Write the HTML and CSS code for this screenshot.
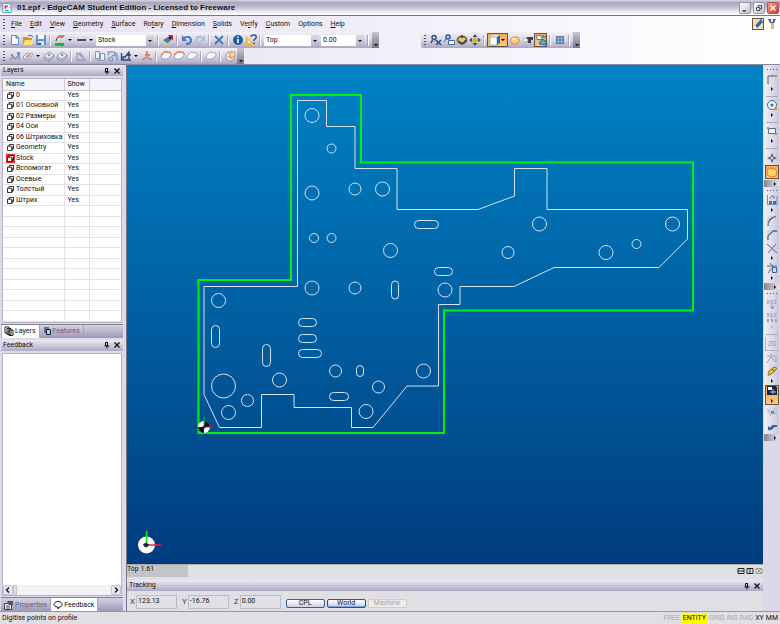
FILE: index.html
```html
<!DOCTYPE html>
<html lang="en">
<head>
<meta charset="utf-8">
<title>01.epf - EdgeCAM Student Edition</title>
<link rel="stylesheet" href="styles.css">
</head>
<body>
<svg class="sprite" aria-hidden="true">
  <symbol id="new" viewBox="0 0 12 12"><path d="M2.500 1.500h5l2 2v7h-7z" fill="#fff" stroke="#5a8fc8"/><path d="M7 1v3h3" fill="#b8d4f0" stroke="#3a70b0"/></symbol>
  <symbol id="open" viewBox="0 0 12 12"><path d="M1 3h4l1 1h4v7H1z" fill="#d89018"/><path d="M3 6h9l-2 5H1z" fill="#ffe070"/><path d="M6 2q3-2 5 1" fill="none" stroke="#3a68b0"/></symbol>
  <symbol id="save" viewBox="0 0 12 12"><path d="M1 1h10v10H1z" fill="#5c94d0"/><path d="M3 1h6v4H3z" fill="#fff"/><path d="M3 7h6v4H3z" fill="#cfe0f4"/><path d="M3 9h3v2H3z" fill="#2c5c98"/></symbol>
  <symbol id="pen" viewBox="0 0 12 12"><path d="M2 7q1-5 5-5" fill="none" stroke="#333"/><path d="M5 1l6 0-2 3-4 0z" fill="#e07838"/><path d="M1 9h9v3H1z" fill="#00c820"/></symbol>
  <symbol id="line" viewBox="0 0 12 12"><path d="M2 6h9" stroke="#222" stroke-width="1.500"/></symbol>
  <symbol id="brush" viewBox="0 0 12 12"><path d="M1 6l5-3 3 3-4 4z" fill="#4b78b8"/><path d="M6 1h5v6z" fill="#d42818"/><path d="M2 7l5 3-1 1-4-2z" fill="#f4d020"/><path d="M7 3l2 2" stroke="#111" stroke-width="2"/></symbol>
  <symbol id="undo" viewBox="0 0 12 12"><path d="M3 4q6-3 7 2 0 4-5 4" fill="none" stroke="#4877b8" stroke-width="2"/><path d="M1 1v6h5z" fill="#4877b8"/></symbol>
  <symbol id="redo" viewBox="0 0 12 12"><path d="M9 4Q3 1 2 6q0 4 5 4" fill="none" stroke="#a9bfdc" stroke-width="2"/><path d="M11 1v6H6z" fill="#a9bfdc"/></symbol>
  <symbol id="cross" viewBox="0 0 12 12"><path d="M2 2l8 8M10 2l-8 8" stroke="#4878b8" stroke-width="2"/></symbol>
  <symbol id="info" viewBox="0 0 12 12"><circle cx="6" cy="6" r="5" fill="#1f5f9c"/><path d="M6 5v4M6 2.500v1.200" stroke="#fff" stroke-width="1.600"/></symbol>
  <symbol id="helpico" viewBox="0 0 12 12"><path d="M1 2v9h9z" fill="#f4bc28"/><path d="M3 6v3h3z" fill="#fff"/><path d="M6 3q0-2 3-2t2 3L9 6v1M9 8.500v1.500" fill="none" stroke="#24589c" stroke-width="1.500"/></symbol>
  <symbol id="view1" viewBox="0 0 12 12"><circle cx="4" cy="3.500" r="2" fill="#cfe2f4" stroke="#2a5890" stroke-width="1.500"/><path d="M2.500 6L1 9M6 6l5 5M11 6l-5 5" stroke="#24548c" stroke-width="1.600"/><path d="M4 7h2" stroke="#e0a010" stroke-width="2"/></symbol>
  <symbol id="view2" viewBox="0 0 12 12"><circle cx="5" cy="3" r="2" fill="#cfe2f4" stroke="#2a5890" stroke-width="1.500"/><path d="M3 5L1 8M5.500 6.500h6v4h-6z" fill="#fff" stroke="#3a689c"/></symbol>
  <symbol id="view3" viewBox="0 0 12 12"><ellipse cx="6" cy="6" rx="4.500" ry="3.500" fill="none" stroke="#8c6a18" stroke-width="2"/><path d="M6 1v4M3 7l3 3 4-4" stroke="#1c4080" fill="none" stroke-width="1.500"/><circle cx="6" cy="6" r="2" fill="#f0c848"/></symbol>
  <symbol id="view4" viewBox="0 0 12 12"><path d="M6 2v8M2 6h8" stroke="#e4ac20" stroke-width="2.500"/><path d="M6 0l2.500 3h-5zM6 12l2.500-3h-5zM0 6l3-2.500v5zM12 6L9 3.500v5z" fill="#2c5a94"/></symbol>
  <symbol id="cube" viewBox="0 0 12 12"><path d="M1 3l3-2h7L8 3z" fill="#d9eefc"/><path d="M1 3h7v8H1z" fill="#fff" stroke="#5080b0" stroke-width=".5"/><path d="M8 3l3-2v8l-3 2z" fill="#2470b8"/></symbol>
  <symbol id="solid" viewBox="0 0 12 12"><path d="M1 6l3-3 5 0 2 4-4 3H3z" fill="#f8c878" stroke="#dc942c"/><path d="M3 5h4" stroke="#fff"/></symbol>
  <symbol id="section" viewBox="0 0 12 12"><path d="M1 5l4-2h6L8 9 2 8z" fill="#a6b6ca"/><path d="M5 3h6v3H9v3H6V5H5z" fill="#3b4450"/><path d="M2 5h3v2H2z" fill="#fff"/></symbol>
  <symbol id="ortho" viewBox="0 0 12 12"><path d="M1.500 1.500h4l2 4H2z" fill="#fff" stroke="#4a86a8"/><path d="M4 10l3-5 4 2v4z" fill="#48b0d0" stroke="#2c6890"/><path d="M8 1v2h3" fill="none" stroke="#24587c"/></symbol>
  <symbol id="grid" viewBox="0 0 12 12"><path d="M2 2h8v8H2z" fill="#c4d4e8"/><path d="M3 2v8M6 2v8M9 2v8M2 3h8M2 6h8M2 9h8" stroke="#3c6498"/></symbol>
  <symbol id="steps" viewBox="0 0 12 12"><path d="M1 10l3-4 2 3 4-4v5" fill="none" stroke="#8699b5" stroke-width="1.500"/><path d="M2 4h2v2H2zM8 2h3v3H8z" fill="#7b8fb2"/></symbol>
  <symbol id="disc" viewBox="0 0 12 12"><path d="M1 7l4-4 6 1-4 5H2z" fill="#eeeef4" stroke="#929ab0"/><path d="M4 7l4-2" stroke="#dc8868" stroke-width="2"/></symbol>
  <symbol id="mill" viewBox="0 0 12 12"><path d="M1 6l5-4 5 3-5 4z" fill="#fafafc" stroke="#8e98ac"/><path d="M1 7v2l5 2 5-4V5" fill="none" stroke="#8892a8"/><circle cx="6" cy="5" r="1.500" fill="#8994ae"/></symbol>
  <symbol id="lathe" viewBox="0 0 12 12"><path d="M2 2v8h8M2 4h4l4 6M5 2v4h3" fill="none" stroke="#7c92b4"/></symbol>
  <symbol id="copy" viewBox="0 0 12 12"><path d="M1.500 1.500h4v7h-4zM6.500 3.500h4v7h-4zM3 10h3" fill="#eef2fa" stroke="#8197b8"/></symbol>
  <symbol id="turn" viewBox="0 0 12 12"><path d="M1.500 5V2h5M5 5.500h5v5" fill="none" stroke="#8299bc" stroke-width="1.500"/><circle cx="4" cy="9" r="2" fill="none" stroke="#7793bb"/><path d="M7 1l4 3-4 1z" fill="#8299bc"/></symbol>
  <symbol id="chart" viewBox="0 0 12 12"><path d="M1.500 3v7H11M3 9V7h2l4-5v7M6 5h5" fill="none" stroke="#24487c" stroke-width="1.300"/></symbol>
  <symbol id="axes" viewBox="0 0 12 12"><path d="M6 1v6l5 3M6 7l-5 3M4 5h5" fill="none" stroke="#e08068" stroke-width="1.800"/><path d="M4 9l2-2 2 3" stroke="#99a4b8" fill="none"/></symbol>
  <symbol id="ringo" viewBox="0 0 12 12"><path d="M1 6l4-4 6 1v3L7 9 2 9z" fill="#fafafe" stroke="#9098b0"/><path d="M1 5l4-3.500 6 1" fill="none" stroke="#e88860" stroke-width="1.500"/></symbol>
  <symbol id="ringb" viewBox="0 0 12 12"><path d="M1 6l4-4 6 1v3L7 9 2 9z" fill="#fafafe" stroke="#a0aabc"/><path d="M5 10l6-4" stroke="#9cb4d8"/></symbol>
  <symbol id="boxy" viewBox="0 0 12 12"><circle cx="6" cy="6.500" r="4.500" fill="#e8e8f2" stroke="#8898b0"/><path d="M6 2h5v5H6zM3 6l5 3" fill="#f8dfa0" stroke="#d49848"/></symbol>
  <symbol id="polyline" viewBox="0 0 12 12"><path d="M2 11V3h7" fill="none" stroke="#40649c"/><path d="M1 9h2v2H1zM9 2h2v2H9z" fill="#cc8a35"/><path d="M6 1v3" stroke="#888"/></symbol>
  <symbol id="circle" viewBox="0 0 12 12"><circle cx="6" cy="6" r="4.500" fill="#e8f1fc" stroke="#3b6aa0"/><circle cx="6" cy="6" r="1.500" fill="#3b6aa0"/><path d="M8 9h3v2H8z" fill="#db941e"/></symbol>
  <symbol id="rect" viewBox="0 0 12 12"><path d="M2.500 3.500h7v5h-7z" fill="#f1f6fd" stroke="#446fa8"/><path d="M1 2h2v2H1zM9 8h2v2H9z" fill="#d28b30"/></symbol>
  <symbol id="point" viewBox="0 0 12 12"><path d="M6 1l1.500 3.500L11 6 7.500 7.500 6 11 4.500 7.500 1 6l3.500-1.500z" fill="#3a6098"/><circle cx="6" cy="6" r="1.500" fill="#ffe03c"/></symbol>
  <symbol id="surf" viewBox="0 0 12 12"><path d="M1 4l3-2 5 1 2 2-1 5-5 1-4-2z" fill="#ffd05c" stroke="#e87822"/><path d="M3 5l3 2 3-2" stroke="#fff5d0" fill="none"/></symbol>
  <symbol id="pattern" viewBox="0 0 12 12"><path d="M1.500 1v9.500H11V2" fill="none" stroke="#7790b0"/><path d="M3 7h3v3H3zM7 7h3v3H7z" fill="#456b9c"/><path d="M4 5q1-4 4-3v3" fill="none" stroke="#5279a8"/></symbol>
  <symbol id="fillet" viewBox="0 0 12 12"><path d="M2 11Q2 3 10 1.500" fill="none" stroke="#3c6494" stroke-width="1.300"/><path d="M2 10V2h8" fill="none" stroke="#b4bfd0" stroke-width=".7"/></symbol>
  <symbol id="chamfer" viewBox="0 0 12 12"><path d="M2 11V7l5-5h4" fill="none" stroke="#3c6494" stroke-width="1.300"/><path d="M2 7V2h5" fill="none" stroke="#b4bfd0" stroke-width=".7"/></symbol>
  <symbol id="trim" viewBox="0 0 12 12"><path d="M1 2l10 9M10 2l-8 9" stroke="#506f98"/></symbol>
  <symbol id="explode" viewBox="0 0 12 12"><path d="M1 4h10M4 1l3 4-5 6" fill="none" stroke="#496c98"/><path d="M6.500 5.500h4v5h-4z" fill="#cde0f2" stroke="#3c6494"/></symbol>
  <symbol id="star" viewBox="0 0 12 12"><path d="M1 4h9M5 1v4l-4 6M5 5l5 5V5" fill="none" stroke="#94a7c4"/></symbol>
  <symbol id="torch" viewBox="0 0 12 12"><path d="M2 10l1-4 5-4 3 1-2 3-5 4z" fill="#e8c03c" stroke="#927228"/><path d="M6 4l2 2" stroke="#604c20"/></symbol>
  <symbol id="save2" viewBox="0 0 12 12"><path d="M1 1h9l1 2v7H1z" fill="#1c2434"/><path d="M2 2h4v3H2z" fill="#fff"/><path d="M4 7h6M7 4v5" stroke="#6ba0dc" stroke-width="1.500"/></symbol>
  <symbol id="node" viewBox="0 0 12 12"><path d="M1 3l10 6M1 6h10M9 2L4 10" stroke="#a7b5cc"/><path d="M5 5h3v3H5z" fill="#6a8eb8"/></symbol>
  <symbol id="wave" viewBox="0 0 12 12"><path d="M2 10V6q3 3 4-1h5v2H8q-2 4-6 3z" fill="#2d66aa"/></symbol>
  <symbol id="layer" viewBox="0 0 8 8"><path d="M2.500.5h5v4h-5z" fill="#fff" stroke="#111"/><path d="M.5 2.500h5v5h-5z" fill="#fff" stroke="#111"/><path d="M6 5v2M7 4v2" stroke="#111"/></symbol>
  <symbol id="pin" viewBox="0 0 8 8"><path d="M2.500 1.500h2v3h-2zM1.500 5h5M4 5v2.500" fill="none" stroke="#111"/><path d="M4.500 1v4" stroke="#111"/></symbol>
  <symbol id="x" viewBox="0 0 8 8"><path d="M1.500 1.500l5 5M6.500 1.500l-5 5" stroke="#111" stroke-width="1.300"/></symbol>
</svg>

<div class="window">
  <header class="titlebar">
    <svg class="appicon" viewBox="0 0 12 12"><path d="M1 .5h7L11 3v8.500H1z" fill="#fff" stroke="#2c9cd8"/><path d="M3 3h4v2H5v2H3z" fill="#e03828"/><path d="M4 8h4v2H4zM8 4l2 1v2z" fill="#2490c8"/></svg>
    <h1>01.epf - EdgeCAM Student Edition - Licensed to Freeware</h1>
    <button class="winbtn" aria-label="Minimize"><svg viewBox="0 0 12 12"><path d="M3 9.500h4" stroke="#222" stroke-width="1.600"/></svg></button>
    <button class="winbtn" aria-label="Restore"><svg viewBox="0 0 12 12"><path d="M5 5V3h4v4H7M3 5.500h4v3.500H3z" fill="none" stroke="#333"/></svg></button>
    <button class="winbtn close" aria-label="Close"><svg viewBox="0 0 12 12"><path d="M3 3l6 6M9 3l-6 6" stroke="#fff" stroke-width="1.600"/></svg></button>
  </header>

  <div class="bars">
    <nav class="menubar">
      <i class="grip"></i>
      <a href="#"><u>F</u>ile</a><a href="#"><u>E</u>dit</a><a href="#"><u>V</u>iew</a><a href="#"><u>G</u>eometry</a><a href="#"><u>S</u>urface</a><a href="#">Ro<u>t</u>ary</a><a href="#"><u>D</u>imension</a><a href="#"><u>S</u>olids</a><a href="#">Ve<u>r</u>ify</a><a href="#"><u>C</u>ustom</a><a href="#">Options</a><a href="#"><u>H</u>elp</a>
      <span class="modes">
        <button class="tb on" aria-label="Design"><svg viewBox="0 0 12 12"><path d="M1 1h10v10H1z" fill="#fbd9a0"/><path d="M2 9l7-8 2 3-6 6z" fill="#2b66b8"/><path d="M1 11l2-4 2 3z" fill="#fff"/></svg></button>
        <button class="tb" aria-label="Manufacture"><svg viewBox="0 0 12 12"><path d="M2 1h8L8 5H4z" fill="#42678c"/><path d="M5 1h2v3H5z" fill="#dcebf8"/><path d="M5 5h3v6H5z" fill="#dcc06c"/></svg></button>
      </span>
    </nav>

    <div class="toolrow">
      <div class="toolbar">
        <i class="grip"></i>
        <button class="tb" aria-label="New"><svg><use href="#new"/></svg></button>
        <button class="tb" aria-label="Open"><svg><use href="#open"/></svg></button>
        <button class="tb" aria-label="Save"><svg><use href="#save"/></svg></button>
        <i class="sep"></i>
        <button class="tb drop" aria-label="Colour"><svg><use href="#pen"/></svg></button>
        <button class="tb drop" aria-label="Line style"><svg><use href="#line"/></svg></button>
        <span class="combo wide"><select aria-label="Layer"><option>Stock</option></select></span>
        <i class="sep"></i>
        <button class="tb" aria-label="Change"><svg><use href="#brush"/></svg></button>
        <i class="sep"></i>
        <button class="tb" aria-label="Undo"><svg><use href="#undo"/></svg></button>
        <button class="tb" aria-label="Redo"><svg><use href="#redo"/></svg></button>
        <i class="sep"></i>
        <button class="tb" aria-label="Delete"><svg><use href="#cross"/></svg></button>
        <i class="sep"></i>
        <button class="tb" aria-label="Info"><svg><use href="#info"/></svg></button>
        <button class="tb" aria-label="Help"><svg><use href="#helpico"/></svg></button>
        <i class="sep"></i>
        <span class="combo mid"><select aria-label="Plane"><option>Top</option></select></span>
        <span class="combo small"><select aria-label="Level"><option>0.00</option></select></span>
        <i class="sep"></i>
        <i class="end"></i>
      </div>
      <div class="toolbar second">
        <i class="grip"></i>
        <button class="tb" aria-label="Zoom extents"><svg><use href="#view1"/></svg></button>
        <button class="tb" aria-label="Zoom window"><svg><use href="#view2"/></svg></button>
        <button class="tb" aria-label="Rotate"><svg><use href="#view3"/></svg></button>
        <button class="tb" aria-label="Pan"><svg><use href="#view4"/></svg></button>
        <i class="sep"></i>
        <button class="tb drop on" aria-label="Shading"><svg><use href="#cube"/></svg></button>
        <button class="tb" aria-label="Solid"><svg><use href="#solid"/></svg></button>
        <button class="tb" aria-label="Section"><svg><use href="#section"/></svg></button>
        <button class="tb on" aria-label="Views"><svg><use href="#ortho"/></svg></button>
        <i class="sep"></i>
        <button class="tb" aria-label="Grid"><svg><use href="#grid"/></svg></button>
        <i class="sep"></i>
        <i class="end"></i>
      </div>
    </div>

    <div class="toolrow">
      <div class="toolbar">
        <i class="grip"></i>
        <button class="tb" aria-label="Feature steps"><svg><use href="#steps"/></svg></button>
        <button class="tb drop" aria-label="Disc"><svg><use href="#disc"/></svg></button>
        <button class="tb" aria-label="Mill"><svg><use href="#mill"/></svg></button>
        <button class="tb" aria-label="Mill hole"><svg><use href="#mill"/></svg></button>
        <i class="sep"></i>
        <button class="tb" aria-label="Lathe"><svg><use href="#lathe"/></svg></button>
        <i class="sep"></i>
        <button class="tb" aria-label="Copy"><svg><use href="#copy"/></svg></button>
        <button class="tb" aria-label="Turn"><svg><use href="#turn"/></svg></button>
        <button class="tb drop" aria-label="Chart"><svg><use href="#chart"/></svg></button>
        <button class="tb" aria-label="Axes"><svg><use href="#axes"/></svg></button>
        <i class="sep"></i>
        <button class="tb" aria-label="Ring top"><svg><use href="#ringo"/></svg></button>
        <button class="tb" aria-label="Ring side"><svg><use href="#ringo"/></svg></button>
        <button class="tb" aria-label="Ring base"><svg><use href="#ringb"/></svg></button>
        <i class="sep"></i>
        <button class="tb" aria-label="Ring"><svg><use href="#ringb"/></svg></button>
        <i class="sep"></i>
        <button class="tb" aria-label="Stock box"><svg><use href="#boxy"/></svg></button>
        <i class="end"></i>
      </div>
    </div>
  </div>

  <div class="work">
    <aside class="side">
      <section class="pane layers">
        <h2 class="caption">Layers<span><button aria-label="Pin"><svg><use href="#pin"/></svg></button><button aria-label="Close"><svg><use href="#x"/></svg></button></span></h2>
        <div class="sheet">
          <table>
            <thead><tr><th>Name</th><th>Show</th><th></th></tr></thead>
            <tbody>
              <tr><td><svg><use href="#layer"/></svg>0</td><td>Yes</td><td></td></tr>
              <tr><td><svg><use href="#layer"/></svg>01 Основной</td><td>Yes</td><td></td></tr>
              <tr><td><svg><use href="#layer"/></svg>02 Размеры</td><td>Yes</td><td></td></tr>
              <tr><td><svg><use href="#layer"/></svg>04 Оси</td><td>Yes</td><td></td></tr>
              <tr><td><svg><use href="#layer"/></svg>06 Штриховка</td><td>Yes</td><td></td></tr>
              <tr><td><svg><use href="#layer"/></svg>Geometry</td><td>Yes</td><td></td></tr>
              <tr><td><svg class="current"><use href="#layer"/></svg>Stock</td><td>Yes</td><td></td></tr>
              <tr><td><svg><use href="#layer"/></svg>Вспомогат</td><td>Yes</td><td></td></tr>
              <tr><td><svg><use href="#layer"/></svg>Осевые</td><td>Yes</td><td></td></tr>
              <tr><td><svg><use href="#layer"/></svg>Толстый</td><td>Yes</td><td></td></tr>
              <tr><td><svg><use href="#layer"/></svg>Штрих</td><td>Yes</td><td></td></tr>
              <tr><td></td><td></td><td></td></tr><tr><td></td><td></td><td></td></tr><tr><td></td><td></td><td></td></tr>
              <tr><td></td><td></td><td></td></tr><tr><td></td><td></td><td></td></tr><tr><td></td><td></td><td></td></tr>
              <tr><td></td><td></td><td></td></tr><tr><td></td><td></td><td></td></tr><tr><td></td><td></td><td></td></tr>
              <tr><td></td><td></td><td></td></tr><tr><td></td><td></td><td></td></tr>
            </tbody>
          </table>
        </div>
        <div class="tabs">
          <button class="active"><svg viewBox="0 0 10 10"><path d="M1 1h4v6H1zM3 2.500h4v6H3zM5 4h4v5.500H5z" fill="#fff" stroke="#222"/></svg>Layers</button>
          <button><svg viewBox="0 0 10 10"><path d="M2 1h5v6H2z" fill="#6a6a90"/><path d="M4.500 3.500h4v5h-4z" fill="#9fd8e0" stroke="#223"/></svg>Features</button>
        </div>
      </section>
      <section class="pane feedback">
        <h2 class="caption">Feedback<span><button aria-label="Pin"><svg><use href="#pin"/></svg></button><button aria-label="Close"><svg><use href="#x"/></svg></button></span></h2>
        <div class="sheet log">
          <div class="hscroll"><button aria-label="Scroll left"><svg viewBox="0 0 8 8"><path d="M5 1.500L2.500 4 5 6.500" fill="none" stroke="#222" stroke-width="1.500"/></svg></button><i></i><button aria-label="Scroll right"><svg viewBox="0 0 8 8"><path d="M3 1.500L5.500 4 3 6.500" fill="none" stroke="#222" stroke-width="1.500"/></svg></button></div>
        </div>
        <div class="tabs">
          <button><svg viewBox="0 0 10 10"><path d="M.5 3.500h7v6h-7z" fill="#eee" stroke="#444"/><path d="M3 1h6v4H5z" fill="#555"/><path d="M2 6h4M2 8h4" stroke="#555"/></svg>Properties</button>
          <button class="active"><svg viewBox="0 0 10 10"><path d="M5 1.500c2.500 0 4 1 4 3s-1 2.500-3 2.500L5 9V7C2 7 1 6 1 4.500s1.500-3 4-3z" fill="#fff" stroke="#222"/></svg>Feedback</button>
        </div>
      </section>
    </aside>

    <main class="stage">
      <svg class="drawing" viewBox="127 65 635 499" preserveAspectRatio="xMinYMin meet" role="img" aria-label="Part profile">
        <g class="part">
          <path d="M204 286.500H297.500V100.500H326.500V126.500H355V168.500H397V209.500H478L514.500 196V168.500H547V209.500H687.500V239L659 267.500H554L514 286.500H460V304.500H438.500V386H407L373 427.500H351.500V407.500H294V394.500H261.500V427.500H219.500L204 394.500z"/>
          <circle cx="312" cy="115.500" r="7"/><circle cx="331.500" cy="148.500" r="4.500"/><circle cx="312" cy="193" r="7"/><circle cx="355" cy="189" r="6"/><circle cx="382.500" cy="189" r="7"/>
          <circle cx="314" cy="238" r="4.500"/><circle cx="331.500" cy="238" r="4.500"/><circle cx="390.500" cy="250.500" r="7"/><circle cx="508" cy="252.500" r="6"/><circle cx="539.500" cy="224" r="7"/>
          <circle cx="606" cy="252.500" r="7"/><circle cx="636.500" cy="244" r="4.500"/><circle cx="672.500" cy="224" r="7"/><circle cx="312" cy="288" r="7"/><circle cx="355" cy="288" r="6"/>
          <circle cx="445" cy="290" r="7"/><circle cx="218.500" cy="300.500" r="7"/><circle cx="223.500" cy="386" r="12"/><circle cx="228.500" cy="412.500" r="7"/><circle cx="247.500" cy="400.500" r="6"/>
          <circle cx="279.500" cy="380" r="7"/><circle cx="335.500" cy="371" r="6"/><circle cx="378.500" cy="387" r="6"/><circle cx="366" cy="411.500" r="7"/><circle cx="423.500" cy="371" r="7"/>
          <rect x="414.500" y="220.500" width="24" height="8" rx="4"/><rect x="434.500" y="267.500" width="18" height="8" rx="4"/><rect x="391.500" y="281" width="7" height="18" rx="3.500"/>
          <rect x="298.500" y="318.500" width="18" height="8" rx="4"/><rect x="298.500" y="334.500" width="18" height="8" rx="4"/><rect x="298.500" y="349.500" width="23" height="8" rx="4"/>
          <rect x="211.500" y="325.500" width="8" height="22" rx="4"/><rect x="262.500" y="344.500" width="8" height="22" rx="4"/><rect x="356.500" y="365.500" width="7" height="11" rx="3.500"/><rect x="329.500" y="392.500" width="19" height="8" rx="4"/>
        </g>
        <path class="stock" d="M198.500 280H291V95H361V162.500H693V310.500H444V433H198.500z"/>
        <circle cx="204" cy="427" r="6" fill="#fff"/><path d="M204 427v-6a6 6 0 0 0-6 6zM204 427h6a6 6 0 0 1-6 6z" fill="#111" transform="rotate(90 204 427)"/><path d="M204 427v-10" stroke="#0d0"/><path d="M205 427h8" stroke="#d22"/><circle cx="204" cy="427" r="1.500" fill="#118"/>
        <circle cx="146.500" cy="545" r="8.500" fill="#fff"/><path d="M146.500 545v-14" stroke="#0e0" stroke-width="1.500"/><path d="M148 545h13" stroke="#e22" stroke-width="1.500"/><path d="M143 544.500l3-2 3 2-2 3-3-1z" fill="#123"/>
      </svg>
      <div class="viewbar"><span>Top 1.61</span><i><svg viewBox="0 0 8 8"><path d="M1 1.500h6v5H1zM1 4h6" fill="none" stroke="#222"/></svg><svg viewBox="0 0 8 8"><path d="M1 1.500h6v5H1zM4 1.500v5" fill="none" stroke="#222"/></svg><svg viewBox="0 0 8 8"><path d="M1 1.500h6v5H1zM2 2l4 4M6 2L2 6" fill="none" stroke="#999"/></svg></i></div>
      <section class="tracking">
        <h2 class="caption">Tracking<span><button aria-label="Pin"><svg><use href="#pin"/></svg></button><button aria-label="Close"><svg><use href="#x"/></svg></button></span></h2>
        <form class="coords">
          <label for="cx">X</label><input id="cx" value="123.13" readonly>
          <label for="cy">Y</label><input id="cy" value="-16.76" readonly>
          <label for="cz">Z</label><input id="cz" value="0.00" readonly>
          <div class="frames"><button type="button">CPL</button><button type="button" class="sel">World</button><button type="button" disabled>Machine</button></div>
        </form>
      </section>
    </main>

    <div class="rail">
      <div class="vbar">
        <i class="vgrip"></i>
        <button class="tb more" aria-label="Line"><svg><use href="#polyline"/></svg></button><i class="vsep"></i>
        <button class="tb more" aria-label="Circle"><svg><use href="#circle"/></svg></button><i class="vsep"></i>
        <button class="tb more" aria-label="Rectangle"><svg><use href="#rect"/></svg></button><i class="vsep"></i>
        <button class="tb" aria-label="Point"><svg><use href="#point"/></svg></button>
        <button class="tb on" aria-label="Surface"><svg><use href="#surf"/></svg></button>
        <i class="vend"></i>
      </div>
      <div class="vbar">
        <i class="vgrip"></i>
        <button class="tb more" aria-label="Pattern"><svg><use href="#pattern"/></svg></button>
        <button class="tb" aria-label="Fillet"><svg><use href="#fillet"/></svg></button>
        <button class="tb" aria-label="Chamfer"><svg><use href="#chamfer"/></svg></button>
        <button class="tb more" aria-label="Trim"><svg><use href="#trim"/></svg></button>
        <button class="tb more" aria-label="Explode"><svg><use href="#explode"/></svg></button>
        <i class="vend"></i>
      </div>
      <div class="vbar">
        <i class="vgrip"></i>
        <button class="tb glyph" aria-label="Coordinates">xyz<svg viewBox="0 0 12 4"><path d="M5 0h3v3H5z" fill="#8fa3c8"/></svg></button>
        <button class="tb glyph more dim" aria-label="Coordinate list">xyz<svg viewBox="0 0 12 4"><path d="M1 0h2v3H1zM5 0h2v3H5zM9 0h2v3H9z" fill="#8fa3c8"/></svg></button>
        <i class="vsep"></i>
        <button class="tb glyph framed" aria-label="Flatten">2D</button>
        <button class="tb" aria-label="Snap"><svg><use href="#star"/></svg></button>
        <button class="tb more" aria-label="Highlight"><svg><use href="#torch"/></svg></button>
        <button class="tb more on" aria-label="Entity"><svg><use href="#save2"/></svg></button>
        <button class="tb" aria-label="Node"><svg><use href="#node"/></svg></button>
        <button class="tb" aria-label="Chain"><svg><use href="#wave"/></svg></button>
        <i class="vend"></i>
      </div>
    </div>
  </div>

  <footer class="status"><p>Digitise points on profile</p><span class="off">FREE</span><span class="hot">ENTITY</span><span class="off">GRID</span><span class="off">INS</span><span class="off">RAD</span><span>XY</span><span>MM</span></footer>
</div>
</body>
</html>
```
FILE: styles.css
```css
* { box-sizing: border-box; }
body { margin: 0; font: 7px/10px Roboto, "Liberation Sans", sans-serif; color: #111; background: #e0dfe3; }
button, input, select { font: inherit; color: inherit; margin: 0; padding: 0; border: 0; background: none; border-radius: 0; }
a { color: inherit; text-decoration: none; }
h1, h2, p { margin: 0; font-weight: normal; }
svg { display: block; flex: none; }
.sprite { position: absolute; width: 0; height: 0; }

.window { min-height: 100vh; display: flex; flex-direction: column; }

.titlebar { height: 16px; flex: none; display: flex; align-items: center; gap: 2px; padding: 0 1px 0 2px; border-bottom: 1px solid #77777f; background: linear-gradient(#d8d6e2, #a9a6bc 18%, #c3c0d2 50%, #f4f3f8 85%, #fff); }
.titlebar h1 { flex: 1; font: bold 8px/14px "Liberation Sans", sans-serif; padding-left: 3px; }
.appicon { width: 10px; height: 12px; }
.winbtn { width: 12px; height: 12px; border: 1px solid #9a97ae; border-radius: 2px; background: linear-gradient(135deg, #fff, #c2bfd2); }
.winbtn svg { width: 10px; height: 10px; }
.close { background: linear-gradient(135deg, #f0a08c, #cc3c2c); border-color: #b85040; }

.bars { flex: none; background: linear-gradient(90deg, #e3def0, #f3f1f9 55%, #fff); border-bottom: 1px solid #8b8894; }
.menubar { height: 16px; display: flex; align-items: center; gap: 8px; padding-left: 3px; }
.menubar .grip { margin-right: -2px; }
.modes { margin-left: auto; display: flex; gap: 2px; padding-right: 2px; }
.modes .tb { width: 12px; height: 12px; }
.modes svg { width: 10px; height: 10px; }

.toolrow { display: flex; gap: 42px; }
.toolbar { height: 16px; display: flex; align-items: center; padding-left: 3px; background: linear-gradient(#f3f1f8, #d9d6e6 50%, #aaa6c0); border-radius: 2px; }
.grip { width: 2px; height: 10px; margin-right: 3px; background: repeating-linear-gradient(#55536a 0 1px, transparent 1px 3px); }
.sep { width: 1px; height: 11px; margin: 0 3px 0 2px; background: #aaa7bc; box-shadow: 1px 0 #fff; }
.end { align-self: stretch; width: 7px; background: linear-gradient(#c9c7d2, #77758a); display: flex; align-items: flex-end; justify-content: center; padding-bottom: 2px; margin-left: 1px; }
.end::after { content: ""; border: 2px solid transparent; border-top-color: #111; border-bottom: 0; }
.tb { flex: none; width: 13px; height: 14px; display: flex; align-items: center; justify-content: center; }
.tb svg { width: 12px; height: 12px; }
.drop { width: 21px; justify-content: space-between; padding: 0 2px 0 1px; }
.drop::after { content: ""; border: 2px solid transparent; border-top-color: #111; border-bottom: 0; }
.on { background: linear-gradient(#f8a850, #fdc878); border: 1px solid #665448; }
.combo { position: relative; display: flex; height: 11px; margin: 0 1px; }
.combo select { appearance: none; width: 100%; padding-left: 2px; line-height: 11px; background: linear-gradient(#dddbe8, #b5b2c8) right / 8px 100% no-repeat #fff; }
.combo::after { content: ""; position: absolute; right: 2px; top: 5px; border: 2px solid transparent; border-top-color: #111; border-bottom: 0; pointer-events: none; }
.wide { width: 58px; }
.mid { width: 55px; }
.small { width: 43px; }

.work { flex: 1; min-height: 0; display: flex; background: #dcd8ea; }
.side { width: 127px; flex: none; display: flex; flex-direction: column; gap: 2px; padding: 0 3px 0 1px; border-right: 1px solid #77758a; background: #dedaea; }
.pane { min-height: 0; display: flex; flex-direction: column; }
.layers { flex: 272 0 0; }
.feedback { flex: 271 0 0; }
.caption { flex: none; height: 11px; font-size: 7px; line-height: 11px; padding: 0 2px; display: flex; justify-content: space-between; background: linear-gradient(#eceaf5, #aeaac4); }
.caption span { display: flex; align-items: center; gap: 2px; }
.caption svg { width: 8px; height: 8px; }
.sheet { flex: 1; min-height: 0; margin: 2px 1px 1px; border: 1px solid #b5b3bf; background: #fff; }
table { width: 100%; height: 100%; border-collapse: collapse; table-layout: fixed; }
th, td { height: 9px; padding: 0 0 0 3px; text-align: left; font-weight: normal; line-height: 9px; border-right: 1px solid #e4e3ea; border-bottom: 1px solid #e4e3ea; white-space: nowrap; }
tbody tr { height: 10px; }
th:first-child { width: 61px; }
th:nth-child(2) { width: 25px; }
th:last-child, td:last-child { border-right: 0; }
thead th { height: 11px; border-color: #cbc8d4; background: #f5f4f9; }
td svg { display: inline-block; width: 9px; height: 9px; padding: 1px; vertical-align: top; margin-right: 1px; }
.current { background: #ee2430; }
.tabs { flex: none; height: 14px; display: flex; padding-left: 1px; border-top: 1px solid #85828f; background: linear-gradient(#d6d2e4, #9e99b8); }
.tabs button { display: flex; align-items: center; gap: 1px; padding: 0 3px 0 2px; color: #66617e; border-right: 1px solid #a9a5bb; }
.tabs .active { color: #111; background: #fff; }
.tabs svg { width: 10px; height: 10px; }
.log { display: flex; align-items: flex-end; }
.hscroll { flex: 1; display: flex; justify-content: space-between; background: #f3f2f7; }
.hscroll button { width: 10px; height: 10px; border: 1px solid #c6c4d2; border-radius: 2px; background: #e9e7f1; }
.hscroll i { width: 4px; margin-right: auto; background: #e0ddea; border: 1px solid #c6c4d2; }
.hscroll svg { width: 8px; height: 8px; }

.stage { flex: 1; min-width: 0; display: flex; flex-direction: column; }
.drawing { width: 100%; flex: 1 1 0; min-height: 0; background: linear-gradient(#0083c6, #003c7d); }
.part { fill: none; stroke: #d3e3f0; stroke-width: 1; }
.stock { fill: none; stroke: #00f010; stroke-width: 2; }
.viewbar { flex: none; height: 13px; display: flex; justify-content: space-between; background: #e0dfe3; border-top: 1px solid #a9a7b0; }
.viewbar span { width: 61px; background: #c4c3c6; line-height: 9px; }
.viewbar i { display: flex; align-items: center; gap: 1px; }
.viewbar svg { width: 8px; height: 8px; }
.tracking { flex: none; padding-top: 3px; background: #e0dfe3; }
.coords { height: 20px; display: flex; align-items: center; gap: 1px; padding: 2px 3px 0; }
.coords label { font-size: 8px; color: #444; }
.coords input { width: 41px; height: 14px; padding: 0 1px 2px; margin-right: 4px; border: 1px solid #bebcc6; background: #e0dfe3; }
.frames { display: flex; gap: 2px; padding-top: 2px; }
.frames button { width: 39px; height: 9px; line-height: 7px; border: 1px solid #3b5f8c; border-radius: 2px; background: linear-gradient(#fff, #cfccdc); }
.frames .sel { border-color: #1858a8; box-shadow: inset 0 -1px 1px #6a9ee0; }
.frames button:disabled { color: #a9a7a2; border-color: #cfcdc8; background: #ecebe8; }

.rail { width: 17px; flex: none; padding: 1px 1px 0; }
.vbar { display: flex; flex-direction: column; align-items: center; background: linear-gradient(90deg, #f2f0f8, #cbc7da); }
.vgrip { width: 10px; height: 1px; margin: 3px 0 3px; background: repeating-linear-gradient(90deg, #55536a 0 1px, transparent 1px 3px); }
.vbar .tb { width: 14px; height: 14px; }
.vbar .more { height: 20px; flex-direction: column; }
.more::after { content: ""; border: 2px solid transparent; border-left-color: #111; border-right: 0; margin: 2px 0; }
.dim::after { border-left-color: #aaa; }
.vbar .glyph { flex-direction: column; line-height: 8px; color: #8499c0; }
.glyph svg { width: 12px; height: 4px; }
.framed { border-left: 1px solid #a5b3cc; border-bottom: 1px solid #a5b3cc; }
.vsep { width: 12px; height: 1px; margin: 3px 0 2px; background: #aaa7bc; }
.vend { width: 100%; height: 7px; margin-top: 1px; background: linear-gradient(90deg, #85838f, #e4e2ec); display: flex; align-items: center; justify-content: flex-end; padding-right: 3px; }
.vend::after { content: ""; border: 2px solid transparent; border-left-color: #111; border-right: 0; }

.status { flex: none; height: 13px; display: flex; align-items: center; gap: 2px; padding: 0 2px; border-top: 1px solid #98969f; background: #e0dfe3; }
.status p { flex: 1; }
.status .off { color: #aaa8ae; }
.status .hot { background: #ff0; padding: 0 1px; }
```
